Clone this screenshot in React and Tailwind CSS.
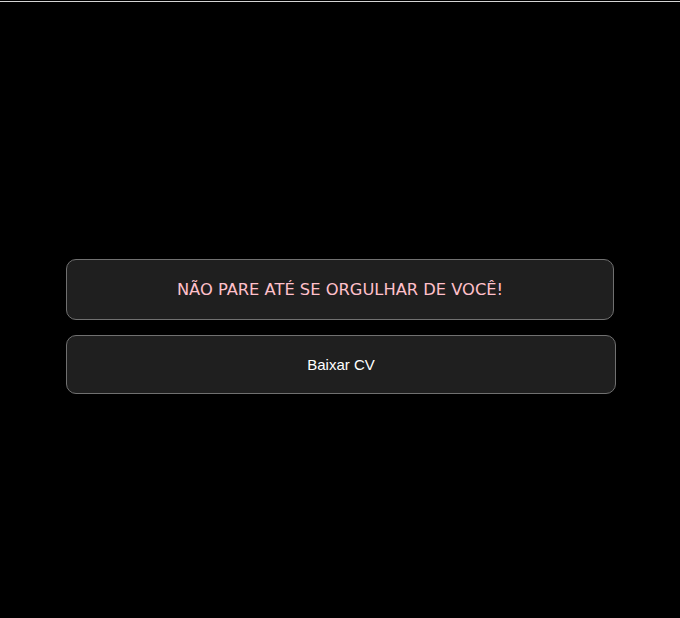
export default function App() {
  return (
    <div className="min-h-[618px] bg-black">
      <div className="h-px bg-[#d4d4d4] translate-y-px" />
      <div className="pt-[258px] pl-[66px] pr-[65px] flex flex-col gap-[15px]">
        <div className="w-[548px] h-[61px] pt-[2px] flex items-center justify-center rounded-[10px] border border-[#707070] bg-[#1f1f1f]">
          <span className="text-[16.3px] text-[#ffc0cb]" style={{ fontFamily: '"DejaVu Sans", sans-serif' }}>
            NÃO PARE ATÉ SE ORGULHAR DE VOCÊ!
          </span>
        </div>
        <div className="w-[550px] h-[59px] pt-[2px] flex items-center justify-center rounded-[10px] border border-[#707070] bg-[#1f1f1f]">
          <span className="text-[15px] text-white" style={{ fontFamily: '"Liberation Sans", Arial, sans-serif' }}>
            Baixar CV
          </span>
        </div>
      </div>
    </div>
  );
}
